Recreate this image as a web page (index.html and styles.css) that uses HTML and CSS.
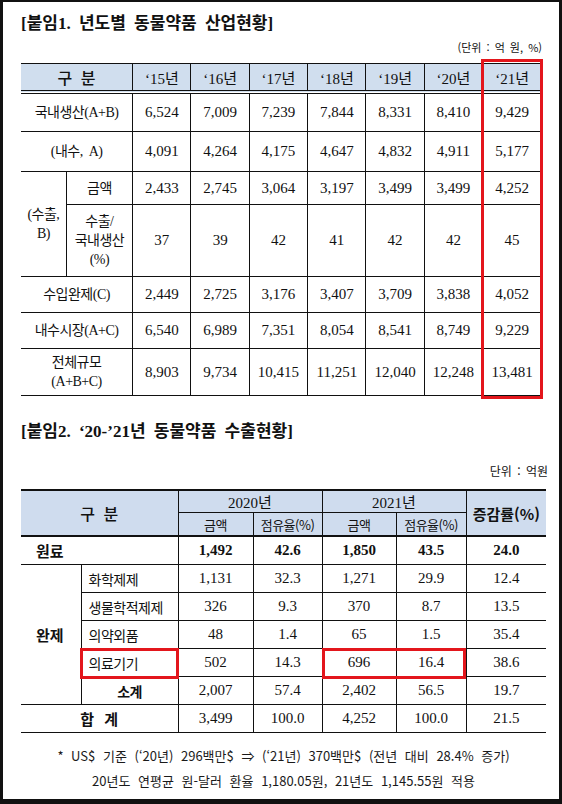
FILE: index.html
```html
<!DOCTYPE html>
<html lang="ko">
<head>
  <meta charset="UTF-8">
  <title>동물약품 산업현황</title>
  <link rel="stylesheet" href="styles.css">
</head>
<body>
  <div class="sheet">
    <h2 class="title">[붙임1. 년도별 동물약품 산업현황]</h2>
    <p class="unit">(단위 : 억 원, %)</p>

    <div class="tbl-wrap">
      <table class="stat">
        <colgroup>
          <col class="c-grp"><col class="c-sub">
          <col class="c-yr"><col class="c-yr"><col class="c-yr"><col class="c-yr"><col class="c-yr"><col class="c-yr"><col class="c-yr">
        </colgroup>
        <thead>
          <tr>
            <th colspan="2" class="head-lbl">구 분</th>
            <th>‘15년</th><th>‘16년</th><th>‘17년</th><th>‘18년</th><th>‘19년</th><th>‘20년</th><th>‘21년</th>
          </tr>
        </thead>
        <tbody>
          <tr class="h38">
            <td colspan="2" class="kr">국내생산(A+B)</td>
            <td>6,524</td><td>7,009</td><td>7,239</td><td>7,844</td><td>8,331</td><td>8,410</td><td>9,429</td>
          </tr>
          <tr class="h40">
            <td colspan="2" class="kr">(내수,&nbsp; A)</td>
            <td>4,091</td><td>4,264</td><td>4,175</td><td>4,647</td><td>4,832</td><td>4,911</td><td>5,177</td>
          </tr>
          <tr class="h33">
            <td rowspan="2" class="kr grp">(수출,<br>B)</td>
            <td class="kr">금액</td>
            <td>2,433</td><td>2,745</td><td>3,064</td><td>3,197</td><td>3,499</td><td>3,499</td><td>4,252</td>
          </tr>
          <tr class="h72">
            <td class="kr">수출/<br>국내생산<br>(%)</td>
            <td>37</td><td>39</td><td>42</td><td>41</td><td>42</td><td>42</td><td>45</td>
          </tr>
          <tr class="h36">
            <td colspan="2" class="kr">수입완제(C)</td>
            <td>2,449</td><td>2,725</td><td>3,176</td><td>3,407</td><td>3,709</td><td>3,838</td><td>4,052</td>
          </tr>
          <tr class="h36">
            <td colspan="2" class="kr">내수시장(A+C)</td>
            <td>6,540</td><td>6,989</td><td>7,351</td><td>8,054</td><td>8,541</td><td>8,749</td><td>9,229</td>
          </tr>
          <tr class="h47">
            <td colspan="2" class="kr">전체규모<br>(A+B+C)</td>
            <td>8,903</td><td>9,734</td><td>10,415</td><td>11,251</td><td>12,040</td><td>12,248</td><td>13,481</td>
          </tr>
        </tbody>
      </table>
      <div class="mark-col"></div>
    </div>

    <h2 class="title title-2">[붙임2. ‘20-’21년 동물약품 수출현황]</h2>
    <p class="unit unit-2">단위 : 억원</p>

    <table class="export">
      <colgroup>
        <col class="e-grp"><col class="e-sub">
        <col class="e-amt"><col class="e-pct"><col class="e-amt2"><col class="e-pct2"><col class="e-rate">
      </colgroup>
      <thead>
        <tr class="top">
          <th colspan="2" rowspan="2" class="head-lbl">구 분</th>
          <th colspan="2">2020년</th>
          <th colspan="2">2021년</th>
          <th rowspan="2" class="rate">증감률(%)</th>
        </tr>
        <tr class="sub">
          <th>금액</th><th>점유율(%)</th><th>금액</th><th>점유율(%)</th>
        </tr>
      </thead>
      <tbody>
        <tr class="strong">
          <td colspan="2" class="lbl">원료</td>
          <td>1,492</td><td>42.6</td><td>1,850</td><td>43.5</td><td>24.0</td>
        </tr>
        <tr>
          <td rowspan="5" class="lbl grp">완제</td>
          <td class="item">화학제제</td>
          <td>1,131</td><td>32.3</td><td>1,271</td><td>29.9</td><td>12.4</td>
        </tr>
        <tr>
          <td class="item">생물학적제제</td>
          <td>326</td><td>9.3</td><td>370</td><td>8.7</td><td>13.5</td>
        </tr>
        <tr>
          <td class="item">의약외품</td>
          <td>48</td><td>1.4</td><td>65</td><td>1.5</td><td>35.4</td>
        </tr>
        <tr>
          <td class="item marked"><span class="red-box"></span>의료기기</td>
          <td>502</td><td>14.3</td>
          <td class="marked"><span class="red-box wide"></span>696</td><td>16.4</td>
          <td>38.6</td>
        </tr>
        <tr>
          <td class="item subtotal">소계</td>
          <td>2,007</td><td>57.4</td><td>2,402</td><td>56.5</td><td>19.7</td>
        </tr>
        <tr class="sum">
          <td colspan="2" class="sum-lbl">합 계</td>
          <td>3,499</td><td>100.0</td><td>4,252</td><td>100.0</td><td>21.5</td>
        </tr>
      </tbody>
    </table>

    <p class="note note-first">* US$ 기준 (‘20년) 296백만$ ⇒ (‘21년) 370백만$ (전년 대비 28.4% 증가)</p>
    <p class="note">20년도 연평균 원-달러 환율 1,180.05원, 21년도 1,145.55원 적용</p>
  </div>
</body>
</html>
```

FILE: styles.css
```css
body {
  margin: 0;
  font-family: "Liberation Serif", "Noto Sans CJK KR", serif;
  color: #111;
  background: #fff;
}
.sheet {
  width: 562px;
  height: 804px;
  box-sizing: border-box;
  border: 3px solid #111;
  border-top-width: 2px;
  border-bottom-width: 5px;
  padding: 0 0 0 18px;
  overflow: hidden;
}
.title {
  margin: 12px 0 0;
  font-size: 17px;
  line-height: 20px;
  font-weight: bold;
  word-spacing: 4px;
}
.unit {
  width: 521px;
  margin: 6px 0 0;
  text-align: right;
  font-family: "Noto Sans CJK KR", sans-serif;
  font-size: 11px;
  line-height: 14px;
  word-spacing: 2px;
}

/* table 1 */
.tbl-wrap {
  position: relative;
  width: 520px;
  margin-top: 9px;
}
table {
  border-collapse: collapse;
  table-layout: fixed;
}
.stat {
  width: 520px;
}
.c-grp { width: 45px; }
.c-sub { width: 66px; }
.c-yr { width: 58px; }
.stat th,
.stat td {
  padding: 0;
  text-align: center;
  border: 1px solid #111;
  font-size: 15px;
  font-weight: normal;
}
.stat tr > :first-child { border-left: none; }
.stat tr > :last-child { border-right: none; }
.stat thead th {
  background: #d0deee;
  height: 26px;
  border-bottom: 4px double #111;
}
.head-lbl {
  font-family: "Noto Sans CJK KR", sans-serif;
  font-size: 16px !important;
  font-weight: 500 !important;
  word-spacing: 4px;
}
.stat .kr {
  font-size: 14px;
  line-height: 19px;
  letter-spacing: -0.5px;
}
.stat .grp { border-left: none; }
.h38 td { height: 37px; }
.h40 td { height: 39px; }
.h33 td { height: 32px; }
.h72 td { height: 71px; }
.h36 td { height: 35px; }
.h47 td { height: 46px; }
.mark-col {
  position: absolute;
  top: -4px;
  bottom: -3px;
  right: -2px;
  width: 62px;
  box-sizing: border-box;
  border: 3px solid #e3161c;
}

/* table 2 */
.title-2 {
  margin-top: 26px;
}
.unit-2 {
  width: 527px;
  margin-top: 22px;
  font-size: 12px;
}
.export {
  width: 525px;
  margin-top: 11px;
  border-top: 2px solid #111;
}
.e-grp { width: 60px; }
.e-sub { width: 97px; }
.e-amt { width: 75px; }
.e-pct { width: 69px; }
.e-amt2 { width: 74px; }
.e-pct2 { width: 70px; }
.e-rate { width: 80px; }
.export th,
.export td {
  padding: 0;
  text-align: center;
  border: 1px solid #111;
  font-size: 15px;
  font-weight: normal;
  height: 27px;
}
.export tr > :first-child { border-left: none; }
.export tr > :last-child { border-right: none; }
.export thead th {
  background: #cfdcee;
  height: 20px;
}
.export thead tr.top th { border-top: 2px solid #111; }
.export thead tr.sub th {
  height: 22px;
  font-family: "Noto Sans CJK KR", sans-serif;
  font-size: 13px;
  letter-spacing: -0.5px;
}
.export thead th { border-bottom: 2px solid #111; }
.export thead tr.top th[colspan="2"]:not(.head-lbl) { border-bottom: 1px solid #111; }
.export .rate {
  font-family: "Noto Sans CJK KR", sans-serif;
  font-weight: bold;
  font-size: 15px;
}
.export .strong td { font-weight: bold; }
.export .lbl {
  text-align: left;
  padding-left: 15px;
  font-family: "Noto Sans CJK KR", sans-serif;
  font-weight: bold;
  font-size: 15px;
}
.export .item {
  text-align: left;
  padding-left: 7px;
  font-family: "Noto Sans CJK KR", sans-serif;
  font-size: 14px;
  letter-spacing: -0.5px;
}
.export .item.subtotal {
  text-align: center;
  padding-left: 0;
  font-weight: bold;
}
.export .sum-lbl {
  font-family: "Noto Sans CJK KR", sans-serif;
  font-weight: bold;
  word-spacing: 6px;
}
.export td.marked { position: relative; }
.red-box {
  position: absolute;
  top: -1px;
  left: -2px;
  right: -1px;
  bottom: -3px;
  border: 3px solid #e3161c;
}
.red-box.wide {
  right: auto;
  left: -1px;
  width: 144px;
  box-sizing: border-box;
}
.note {
  width: 525px;
  margin: 0;
  text-align: center;
  font-family: "Noto Sans CJK KR", sans-serif;
  font-size: 13px;
  line-height: 25px;
  word-spacing: 4px;
  color: #1a1a1a;
}
.note-first { margin-top: 10px; }
```
